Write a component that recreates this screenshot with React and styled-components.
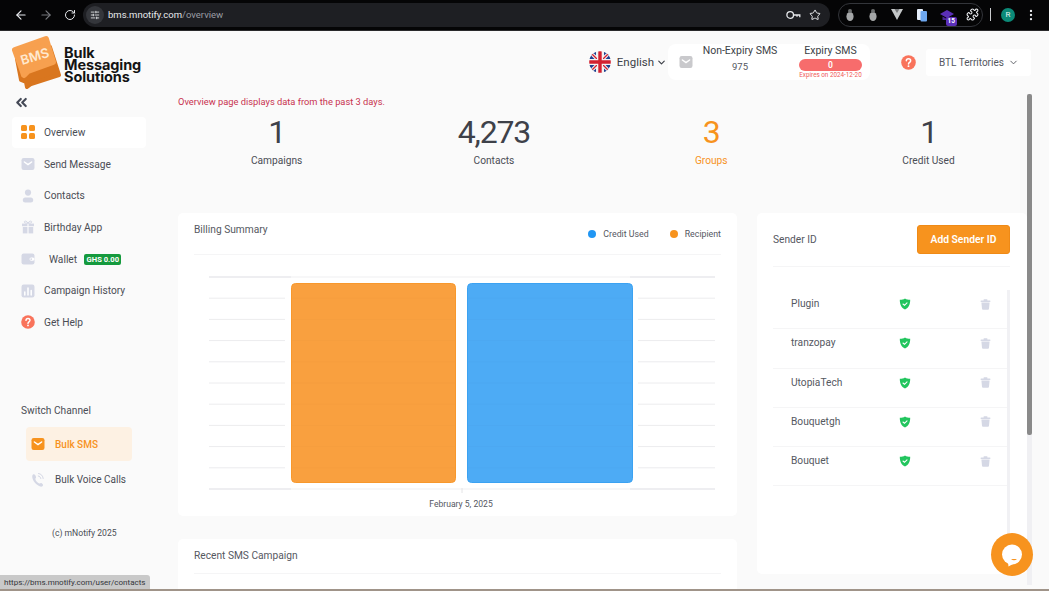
import React from 'react'
import styled, { createGlobalStyle } from 'styled-components'
import { ArrowLeft, ArrowRight, RotateCw, SlidersHorizontal, Star, Puzzle, EllipsisVertical, ChevronDown, ChevronsLeft } from 'lucide-react'

const Global = createGlobalStyle`
  html, body { margin: 0; padding: 0; background: #fafafa; }
  * { box-sizing: border-box; }
`

const Root = styled.div`
  position: relative;
  width: 1049px;
  height: 591px;
  overflow: hidden;
  display: flex;
  flex-direction: column;
  background: #fafafa;
  font-family: Roboto, "Liberation Sans", sans-serif;
  color: #4a4d55;
`

/* browser chrome */
const Chrome = styled.div`
  height: 31px;
  flex: none;
  background: #050506;
  border-bottom: 1px solid #2a2a2c;
  display: flex;
  align-items: center;
  padding: 0 9px 1px 9px;
  color: #e8eaed;
`
const NavBtn = styled.div`
  width: 24.5px;
  display: flex;
  justify-content: center;
  color: ${p => (p.$dim ? '#77797d' : '#e8eaed')};
`
const Address = styled.div`
  width: 747px;
  height: 24px;
  margin-left: 0.5px;
  border-radius: 12px;
  background: #1e1f23;
  display: flex;
  align-items: center;
  padding: 0 9px 0 3px;
`
const TuneChip = styled.div`
  width: 18px;
  height: 18px;
  border-radius: 50%;
  background: #34363b;
  display: flex;
  align-items: center;
  justify-content: center;
  margin-right: 4px;
`
const Url = styled.div`
  flex: 1;
  font-size: 9.5px;
  color: #e8eaed;
  span { color: #9a9da3; }
`
const AddrIcons = styled.div`
  display: flex;
  align-items: center;
  gap: 8px;
`
const Extensions = styled.div`
  width: 145px;
  height: 24px;
  margin-left: 8px;
  border: 1px solid #33353a;
  border-radius: 12px;
  display: flex;
  align-items: center;
  justify-content: space-between;
  padding: 0 3px 0 5px;
`
const ExtCap = styled.div`
  position: relative;
  width: 16px;
  height: 16px;
`
const CapBadge = styled.div`
  position: absolute;
  right: -2px;
  bottom: -3px;
  width: 11px;
  height: 9px;
  background: #5b2fb8;
  border-radius: 2px;
  color: #fff;
  font-size: 6.5px;
  font-weight: 700;
  line-height: 9px;
  text-align: center;
`
const Divider = styled.div`
  width: 1px;
  height: 13px;
  margin-left: 7px;
  background: #c9cbce;
`
const Avatar = styled.div`
  width: 14px;
  height: 14px;
  margin-left: 10px;
  border-radius: 50%;
  background: #0b8a78;
  color: #e8f6f2;
  font-size: 8px;
  line-height: 14px;
  text-align: center;
`
const Dots = styled.div`
  margin-left: 9px;
  display: flex;
`

/* page */
const Page = styled.div`
  flex: 1;
  min-height: 0;
  display: flex;
`
const Sidebar = styled.aside`
  width: 168px;
  flex: none;
  display: flex;
  flex-direction: column;
  padding: 4px 0 0 12px;
`
const Logo = styled.div`
  display: flex;
  height: 54px;
`
const LogoText = styled.div`
  margin: 12px 0 0 2px;
  font-family: Inter, sans-serif;
  font-size: 14.5px;
  font-weight: 700;
  line-height: 12px;
  color: #141414;
  letter-spacing: -0.1px;
`
const Collapse = styled.div`
  height: 18px;
  margin: 5px 0 4.5px 1px;
  display: flex;
  color: #454a57;
`
const NavList = styled.nav`
  display: flex;
  flex-direction: column;
  width: 134px;
`
const NavItem = styled.div`
  height: 31.7px;
  display: flex;
  align-items: center;
  padding-left: 8px;
  border-radius: 4px;
  font-size: 10.2px;
  background: ${p => (p.$active ? '#fff' : 'transparent')};
  color: #4a4d55;
`
const NavIcon = styled.div`
  width: 16px;
  height: 16px;
  flex: none;
  margin-right: ${p => (p.$wide ? '13px' : '8px')};
  display: flex;
  align-items: center;
  justify-content: center;
`
const Balance = styled.span`
  margin-left: 7px;
  padding: 0 2.5px;
  height: 11px;
  border-radius: 2px;
  background: #159a3e;
  color: #fff;
  font-size: 7.6px;
  font-weight: 700;
  line-height: 11px;
`
const SwitchTitle = styled.div`
  margin: 66px 0 0 9px;
  font-size: 10.2px;
  line-height: 14px;
`
const ChannelList = styled.div`
  margin: 9px 0 0 14px;
  width: 106px;
  display: flex;
  flex-direction: column;
  gap: 1px;
`
const Channel = styled.div`
  height: 34px;
  display: flex;
  align-items: center;
  padding-left: 5px;
  border-radius: 4px;
  font-size: 10px;
  font-weight: ${p => (p.$active ? 500 : 400)};
  white-space: nowrap;
  background: ${p => (p.$active ? '#fdf1e3' : 'transparent')};
  color: ${p => (p.$active ? '#f7931e' : '#4a4d55')};
`
const ChannelIcon = styled.div`
  width: 14px;
  height: 14px;
  margin-right: 10px;
  display: flex;
`
const Copy = styled.div`
  margin: 31px 0 0 40px;
  font-size: 8.6px;
  line-height: 12px;
`

const Main = styled.main`
  flex: 1;
  min-width: 0;
  display: flex;
  flex-direction: column;
`
const Topbar = styled.header`
  height: 63px;
  flex: none;
  display: flex;
  align-items: center;
  justify-content: flex-end;
  padding: 0 18px 1px 0;
`
const Lang = styled.div`
  display: flex;
  align-items: center;
  font-size: 11.5px;
  color: #3c3f47;
  svg { flex: none; }
`
const LangName = styled.span`
  margin: 0 2px 0 6px;
`
const Credits = styled.div`
  width: 202px;
  height: 36px;
  margin-left: 1px;
  background: #fff;
  border-radius: 8px;
  display: flex;
  align-items: flex-start;
  padding-left: 11px;
  svg { align-self: center; flex: none; }
`
const CreditCol = styled.div`
  width: ${p => p.$w}px;
  margin-left: ${p => p.$ml}px;
  display: flex;
  flex-direction: column;
  align-items: center;
`
const CreditLabel = styled.div`
  padding-top: 1px;
  font-size: 10.5px;
  line-height: 12px;
  color: #3c3f47;
  white-space: nowrap;
`
const CreditValue = styled.div`
  font-size: 9.5px;
  line-height: 20px;
  color: #55585f;
`
const Pill = styled.div`
  width: 63px;
  height: 12px;
  margin-top: 2px;
  border-radius: 6px;
  background: #f76c6c;
  color: #fff;
  font-size: 8.5px;
  font-weight: 600;
  line-height: 12px;
  text-align: center;
`
const Expires = styled.div`
  font-size: 6.3px;
  line-height: 9px;
  color: #ef5a5a;
  white-space: nowrap;
`
const Help = styled.div`
  margin-left: 31px;
  display: flex;
`
const Org = styled.div`
  width: 105px;
  height: 27px;
  margin-left: 10px;
  background: #fff;
  border-radius: 3px;
  display: flex;
  align-items: center;
  justify-content: space-between;
  padding: 0 12px 0 13px;
  font-size: 10px;
  white-space: nowrap;
  color: #55585f;
`

const Workspace = styled.div`
  flex: 1;
  min-height: 0;
  display: flex;
`
const Scroll = styled.div`
  width: 859px;
  flex: none;
  height: 100%;
  overflow: hidden;
  padding-left: 10px;
`
const Notice = styled.div`
  font-size: 9.3px;
  line-height: 16px;
  color: #c8324f;
`
const Stats = styled.div`
  display: grid;
  grid-template-columns: repeat(4, 217.3px);
  margin: 2px 0 0 -10px;
`
const Stat = styled.div`
  text-align: center;
  color: ${p => (p.$accent ? '#f7931e' : '#3e4149')};
`
const StatValue = styled.div`
  font-size: 32px;
  line-height: 41px;
  letter-spacing: -1.2px;
`
const StatLabel = styled.div`
  font-size: 10.2px;
  line-height: 16px;
  color: ${p => (p.$accent ? '#f7931e' : '#4a4d55')};
`
const Columns = styled.div`
  display: flex;
  align-items: flex-start;
  gap: 20px;
  margin-top: 44px;
`
const LeftCol = styled.div`
  width: 559px;
  display: flex;
  flex-direction: column;
  gap: 23px;
`
const Card = styled.section`
  background: #fff;
  border-radius: 5px;
  padding: 0 16px;
`
const CardHead = styled.div`
  height: ${p => p.$h}px;
  display: flex;
  justify-content: space-between;
  align-items: flex-start;
  border-bottom: 1px solid #f5f5f6;
`
const CardTitle = styled.div`
  margin-top: ${p => p.$mt}px;
  font-size: 10.2px;
  line-height: 14px;
  color: #55585f;
`
const CardBody = styled.div`
  height: 40px;
`
const Legend = styled.div`
  margin-top: 15px;
  display: flex;
  gap: 21px;
  font-size: 8.8px;
  line-height: 12px;
  color: #55585f;
`
const LegendItem = styled.div`
  display: flex;
  align-items: center;
  gap: 7px;
`
const Dot = styled.i`
  width: 8px;
  height: 8px;
  border-radius: 50%;
  background: ${p => p.$color};
`
const ChartWrap = styled.div`
  display: flex;
  margin: 0 -1px;
  height: 261px;
  flex-direction: column;
`
const ChartDate = styled.div`
  font-size: 8.6px;
  line-height: 12px;
  text-align: center;
  margin: -18px 0 0 7px;
  color: #55585f;
`
const SideCard = styled(Card)`
  width: 270px;
  height: 361px;
  padding: 0 0 0 16px;
  display: flex;
  flex-direction: column;
`
const SideHead = styled(CardHead)`
  margin-right: 17px;
  flex: none;
`
const AddBtn = styled.button`
  width: 93px;
  height: 29px;
  margin-top: 12px;
  border: 1px solid #ef8a16;
  border-radius: 3px;
  background: #f7931e;
  color: #fff;
  font-family: inherit;
  font-size: 10.3px;
  font-weight: 600;
`
const ListArea = styled.div`
  flex: 1;
  min-height: 0;
  margin-top: 23px;
  display: flex;
`
const Senders = styled.ul`
  width: 234px;
  margin: 0;
  padding: 0;
  list-style: none;
`
const Sender = styled.li`
  height: 39.3px;
  padding: 7px 5px 0 18px;
  display: flex;
  align-items: flex-start;
  border-bottom: 1px solid #f5f5f6;
  font-size: 10.2px;
  line-height: 14px;
  color: #55585f;
  svg { flex: none; }
`
const SenderName = styled.span`
  width: 108px;
`
const ShieldBox = styled.span`
  width: 81px;
  margin-top: 1px;
  display: flex;
`
const TrashBox = styled.span`
  margin-top: 1.5px;
  display: flex;
`
const InnerTrack = styled.div`
  width: 3px;
  background: #f1f1f4;
`
const PageTrack = styled.div`
  width: 5px;
  height: 491px;
  background: #f0f0f3;
`
const PageThumb = styled.div`
  height: 341px;
  background: #8a8a8a;
  border-radius: 2px;
`
const StatusTip = styled.div`
  position: absolute;
  left: 0;
  bottom: 1px;
  width: 150px;
  height: 15px;
  background: #c9c9c9;
  border-top-right-radius: 3px;
  padding-left: 4px;
  font-size: 8px;
  line-height: 15px;
  color: #33353a;
  white-space: nowrap;
`
const BottomEdge = styled.div`
  position: absolute;
  left: 0;
  right: 0;
  bottom: 0;
  height: 2px;
  background: #a09489;
`
const ChatBtn = styled.div`
  position: absolute;
  left: 991px;
  top: 533px;
  width: 42px;
  height: 43px;
  border-radius: 50%;
  background: #f7931e;
  display: flex;
  align-items: center;
  justify-content: center;
`

const grey = '#d5d8e5'

const GridIcon = () => (
  <svg width="16" height="16" viewBox="0 0 16 16" fill="#f7931e">
    <rect x="1" y="1" width="6" height="6" rx="1.5" />
    <rect x="9" y="1" width="6" height="6" rx="1.5" />
    <rect x="1" y="9" width="6" height="6" rx="1.5" />
    <rect x="9" y="9" width="6" height="6" rx="1.5" />
  </svg>
)
const MailIcon = ({ color = grey }) => (
  <svg width="14" height="14" viewBox="0 0 14 14">
    <rect x="0.5" y="1" width="13" height="12" rx="2.2" fill={color} />
    <path d="M3.4 5l3.6 2.6L10.6 5" fill="none" stroke="#fff" strokeWidth="1.5" strokeLinecap="round" />
  </svg>
)
const UserIcon = () => (
  <svg width="14" height="14" viewBox="0 0 14 14" fill={grey}>
    <circle cx="7" cy="3.6" r="3.1" />
    <rect x="1.8" y="8.4" width="10.4" height="5" rx="2.5" />
  </svg>
)
const GiftIcon = () => (
  <svg width="14" height="14" viewBox="0 0 14 14" fill={grey}>
    <path d="M7 3.2C5.8.8 3.6.6 3.3 1.8 3 3 5 3.2 7 3.2zm0 0C8.2.8 10.4.6 10.7 1.8 11 3 9 3.2 7 3.2z" fill="none" stroke={grey} />
    <rect x="1" y="3.6" width="5.4" height="2.6" />
    <rect x="7.6" y="3.6" width="5.4" height="2.6" />
    <rect x="1.8" y="7" width="4.6" height="6.4" />
    <rect x="7.6" y="7" width="4.6" height="6.4" />
  </svg>
)
const WalletIcon = () => (
  <svg width="14" height="14" viewBox="0 0 14 14">
    <rect x="0.5" y="1.5" width="13" height="11" rx="2.2" fill={grey} />
    <rect x="8.5" y="5.4" width="5" height="3.4" rx="1.7" fill="#fff" />
    <circle cx="10.2" cy="7.1" r="0.9" fill={grey} />
  </svg>
)
const BarsIcon = () => (
  <svg width="14" height="14" viewBox="0 0 14 14">
    <rect x="0.5" y="0.5" width="13" height="13" rx="2.2" fill={grey} />
    <path d="M3.8 11V8M7 11V4M10.2 11V6.5" stroke="#fff" strokeWidth="1.5" strokeLinecap="round" />
  </svg>
)
const HelpIcon = ({ size = 14 }) => (
  <svg width={size} height={size} viewBox="0 0 14 14">
    <circle cx="7" cy="7" r="6.8" fill="#f9735b" />
    <path d="M5 5.4C5 4.2 5.9 3.5 7 3.5s2 .7 2 1.8c0 1.5-2 1.6-2 3.1" fill="none" stroke="#fff" strokeWidth="1.4" strokeLinecap="round" />
    <circle cx="7" cy="10.4" r="0.9" fill="#fff" />
  </svg>
)
const PhoneIcon = () => (
  <svg width="14" height="16" viewBox="0 0 14 16" fill="none">
    <path d="M2 2.5c-2 2 .2 6.5 2.4 8.8 2.2 2.3 5.2 4.2 7 3 1.3-.9.6-2.4-.7-3.1-1-.5-1.6.5-2.5.2C6.7 11 4.6 8.6 4.4 7.2c-.1-1 .9-1.3.6-2.5C4.7 3.2 3.2 1.4 2 2.5z" fill={grey} />
    <path d="M7.5 1.5c2.6.3 4.5 2.4 4.7 5M7.3 4c1.4.2 2.3 1.2 2.5 2.5" stroke={grey} strokeWidth="1" strokeLinecap="round" />
  </svg>
)
const Shield = () => (
  <svg width="12" height="12" viewBox="0 0 12 12">
    <path d="M6 .4c1.5 1 3.2 1.3 5.2 1.3 0 4.6-1.5 8-5.200 9.900C2.300 9.700.8 6.300.8 1.700 2.800 1.700 4.500 1.400 6 .4z" fill="#22c55e" />
    <path d="M4 6l1.500 1.300L8 4.900" fill="none" stroke="#fff" strokeWidth="1.1" strokeLinecap="round" />
  </svg>
)
const Trash = () => (
  <svg width="11" height="11" viewBox="0 0 11 11" fill={grey}>
    <rect x="0.5" y="1.5" width="10" height="1.4" rx="0.7" />
    <rect x="3.5" y="0.3" width="4" height="1.6" rx="0.7" />
    <path d="M1.4 3.600h8.200l-.6 6.200a1 1 0 0 1-1 .9H3a1 1 0 0 1-1-.9z" />
  </svg>
)
const Flag = () => (
  <svg width="22" height="22" viewBox="0 0 22 22">
    <defs>
      <clipPath id="flagClip"><circle cx="11" cy="11" r="10.8" /></clipPath>
    </defs>
    <g clipPath="url(#flagClip)">
      <rect width="22" height="22" fill="#f2f2f2" />
      <path d="M0 8h7V0H3L0 2zM22 8h-7V0h4l3 2zM0 14h7v8H3l-3-2zM22 14h-7v8h4l3-2z" fill="#1f3f8f" />
      <path d="M0 0l22 22M22 0L0 22" stroke="#f2f2f2" strokeWidth="3.5" />
      <path d="M0 0l22 22M22 0L0 22" stroke="#d3202f" strokeWidth="1.3" />
      <path d="M11 0v22M0 11h22" stroke="#f2f2f2" strokeWidth="6" />
      <path d="M11 0v22M0 11h22" stroke="#d3202f" strokeWidth="3.4" />
    </g>
  </svg>
)
const LogoMark = () => (
  <svg width="50" height="54" viewBox="0 0 50 54">
    <path d="M5 24L38 12l9 28-28 9-4 3-1-5-5-2z" fill="#d9761f" stroke="#d9761f" strokeWidth="4" strokeLinejoin="round" />
    <path d="M3 15L34 4l7 23-25 9-4 4-1-3z" fill="#f7a04f" stroke="#f7a04f" strokeWidth="6" strokeLinejoin="round" />
    <text x="23" y="26" textAnchor="middle" transform="rotate(-17 23 22)" fontFamily="Inter, sans-serif" fontSize="13" fontWeight="600" fill="#ffe9cf">BMS</text>
  </svg>
)
const KeyIcon = () => (
  <svg width="15" height="12" viewBox="0 0 15 12" fill="none" stroke="#e8eaed" strokeWidth="1.3">
    <circle cx="4.2" cy="6" r="3.3" />
    <path d="M7.5 6h6.3v2.200M11 6v1.700" />
  </svg>
)
const Bug = () => (
  <svg width="12" height="14" viewBox="0 0 12 14" fill="#a5a7a8">
    <ellipse cx="6" cy="8.5" rx="3.6" ry="4.6" />
    <circle cx="6" cy="3" r="2" fill="#6d6f70" />
  </svg>
)
const Vee = () => (
  <svg width="14" height="13" viewBox="0 0 14 13"><path d="M1 1h12L7 12z" fill="#c4c7c8" /><path d="M4.5 1h5L7 5z" fill="#77797b" /></svg>
)
const Doc = () => (
  <svg width="12" height="14" viewBox="0 0 12 14"><rect x="1" y="1" width="6" height="11" rx="1" fill="#e6eefb" /><rect x="4.5" y="3" width="6.5" height="10.5" rx="1" fill="#6ea8f0" /></svg>
)
const Cap = () => (
  <svg width="16" height="12" viewBox="0 0 16 12"><path d="M8 0l7 4-7 4-7-4z" fill="#5b2fb8" /><path d="M3.5 6.500V10h9V6.500L8 9z" fill="#4a2596" /></svg>
)
const Chart = () => {
  const lines = Array.from({ length: 11 }, (_, i) => 22 + i * 21.2)
  return (
    <svg width="528" height="261" viewBox="0 0 528 261">
      {lines.map((y, i) => {
        const outer = i === 0 || i === 10
        return (
          <g key={y} stroke={outer ? '#e9e9ec' : '#ececee'} strokeWidth={outer ? 1.5 : 1}>
            <line x1="16" x2={outer ? 98 : 92} y1={y} y2={y} />
            <line x1={outer ? 437 : 445} x2="522" y1={y} y2={y} />
            {outer && <line x1="98" x2="437" y1={y} y2={y} stroke="#f5f5f6" />}
          </g>
        )
      })}
      <rect x="98.5" y="28.5" width="164" height="199" rx="4" fill="#f9a03f" stroke="#f8982c" />
      <rect x="274.5" y="28.5" width="165" height="199" rx="4" fill="#4dabf5" stroke="#3ba2f2" />
      {lines.slice(1, 10).map(y => (
        <path key={y} d={`M99 ${y}H262M275 ${y}H439`} stroke="#000" strokeOpacity="0.015" />
      ))}
      <line x1="269" x2="269" y1="233" y2="238" stroke="#e4e4e6" />
    </svg>
  )
}

const navItems = [
  { label: 'Overview', icon: <GridIcon />, active: true },
  { label: 'Send Message', icon: <MailIcon /> },
  { label: 'Contacts', icon: <UserIcon /> },
  { label: 'Birthday App', icon: <GiftIcon /> },
  { label: 'Wallet', icon: <WalletIcon />, balance: 'GHS 0.00' },
  { label: 'Campaign History', icon: <BarsIcon /> },
  { label: 'Get Help', icon: <HelpIcon /> },
]
const stats = [
  { value: '1', label: 'Campaigns' },
  { value: '4,273', label: 'Contacts' },
  { value: '3', label: 'Groups', accent: true },
  { value: '1', label: 'Credit Used' },
]
const senders = ['Plugin', 'tranzopay', 'UtopiaTech', 'Bouquetgh', 'Bouquet']

const App = () => {
  return (
    <Root>
      <Global />
      <Chrome>
        <NavBtn><ArrowLeft size={14} /></NavBtn>
        <NavBtn $dim><ArrowRight size={14} /></NavBtn>
        <NavBtn><RotateCw size={12} /></NavBtn>
        <Address>
          <TuneChip><SlidersHorizontal size={10} /></TuneChip>
          <Url>bms.mnotify.com<span>/overview</span></Url>
          <AddrIcons>
            <KeyIcon />
            <Star size={12} />
          </AddrIcons>
        </Address>
        <Extensions>
          <Bug />
          <Bug />
          <Vee />
          <Doc />
          <ExtCap>
            <Cap />
            <CapBadge>15</CapBadge>
          </ExtCap>
          <Puzzle size={13} />
        </Extensions>
        <Divider />
        <Avatar>R</Avatar>
        <Dots><EllipsisVertical size={14} /></Dots>
      </Chrome>
      <Page>
        <Sidebar>
          <Logo>
            <LogoMark />
            <LogoText>Bulk<br />Messaging<br />Solutions</LogoText>
          </Logo>
          <Collapse><ChevronsLeft size={17} strokeWidth={3} /></Collapse>
          <NavList>
            {navItems.map(item => (
              <NavItem key={item.label} $active={item.active}>
                <NavIcon $wide={item.balance}>{item.icon}</NavIcon>
                {item.label}
                {item.balance && <Balance>{item.balance}</Balance>}
              </NavItem>
            ))}
          </NavList>
          <SwitchTitle>Switch Channel</SwitchTitle>
          <ChannelList>
            <Channel $active>
              <ChannelIcon><MailIcon color="#f7931e" /></ChannelIcon>
              Bulk SMS
            </Channel>
            <Channel>
              <ChannelIcon><PhoneIcon /></ChannelIcon>
              Bulk Voice Calls
            </Channel>
          </ChannelList>
          <Copy>(c) mNotify 2025</Copy>
        </Sidebar>
        <Main>
          <Topbar>
            <Lang>
              <Flag />
              <LangName>English</LangName>
              <ChevronDown size={11} strokeWidth={2.5} />
            </Lang>
            <Credits>
              <MailIcon color="#c9c9cc" />
              <CreditCol $w={90} $ml={2}>
                <CreditLabel>Non-Expiry SMS</CreditLabel>
                <CreditValue>975</CreditValue>
              </CreditCol>
              <CreditCol $w={63} $ml={14}>
                <CreditLabel>Expiry SMS</CreditLabel>
                <Pill>0</Pill>
                <Expires>Expires on 2024-12-20</Expires>
              </CreditCol>
            </Credits>
            <Help><HelpIcon size={15} /></Help>
            <Org>
              BTL Territories
              <ChevronDown size={11} />
            </Org>
          </Topbar>
          <Workspace>
            <Scroll>
              <Notice>Overview page displays data from the past 3 days.</Notice>
              <Stats>
                {stats.map(s => (
                  <Stat key={s.label} $accent={s.accent}>
                    <StatValue>{s.value}</StatValue>
                    <StatLabel $accent={s.accent}>{s.label}</StatLabel>
                  </Stat>
                ))}
              </Stats>
              <Columns>
                <LeftCol>
                  <Card>
                    <CardHead $h={42}>
                      <CardTitle $mt={10}>Billing Summary</CardTitle>
                      <Legend>
                        <LegendItem><Dot $color="#2196f3" />Credit Used</LegendItem>
                        <LegendItem><Dot $color="#f7931e" />Recipient</LegendItem>
                      </Legend>
                    </CardHead>
                    <ChartWrap>
                      <Chart />
                      <ChartDate>February 5, 2025</ChartDate>
                    </ChartWrap>
                  </Card>
                  <Card>
                    <CardHead $h={35}>
                      <CardTitle $mt={10}>Recent SMS Campaign</CardTitle>
                    </CardHead>
                    <CardBody />
                  </Card>
                </LeftCol>
                <SideCard>
                  <SideHead $h={54}>
                    <CardTitle $mt={20}>Sender ID</CardTitle>
                    <AddBtn>Add Sender ID</AddBtn>
                  </SideHead>
                  <ListArea>
                    <Senders>
                      {senders.map(name => (
                        <Sender key={name}>
                          <SenderName>{name}</SenderName>
                          <ShieldBox><Shield /></ShieldBox>
                          <TrashBox><Trash /></TrashBox>
                        </Sender>
                      ))}
                    </Senders>
                    <InnerTrack />
                  </ListArea>
                </SideCard>
              </Columns>
            </Scroll>
            <PageTrack><PageThumb /></PageTrack>
          </Workspace>
        </Main>
      </Page>
      <StatusTip>https://bms.mnotify.com/user/contacts</StatusTip>
      <BottomEdge />
      <ChatBtn>
        <svg width="26" height="26" viewBox="0 0 26 26">
          <circle cx="13" cy="12.5" r="10" fill="#fff" />
          <path d="M9 20l.5 4.500L14 22z" fill="#fff" />
          <path d="M12 17q3 2.500 6 0z" fill="#f7931e" />
        </svg>
      </ChatBtn>
    </Root>
  )
}

export default App
